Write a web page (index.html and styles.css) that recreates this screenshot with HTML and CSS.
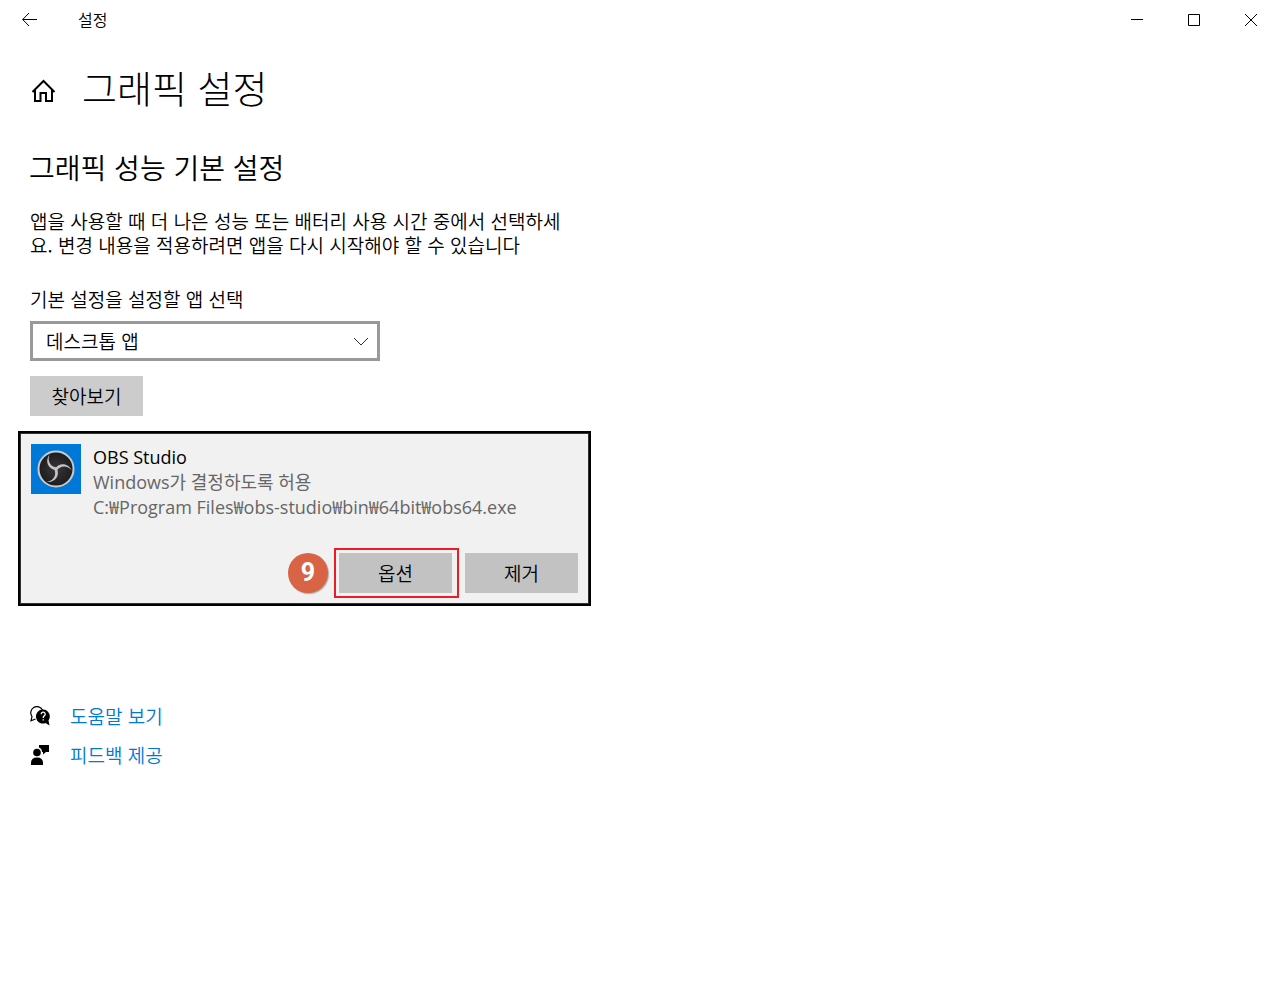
FILE: index.html
```html
<!DOCTYPE html>
<html lang="ko">

<head>
    <meta charset="utf-8">
    <title>설정</title>
    <link rel="stylesheet" href="styles.css">
</head>

<body>
    <header class="titlebar">
        <button class="back" aria-label="뒤로">
            <svg width="16" height="16" viewBox="0 0 16 16"><path d="M15 7.5H.7M7 1L.7 7.5L7 14"/></svg>
        </button>
        <span class="app-title">설정</span>
        <div class="window-buttons">
            <button aria-label="최소화"><svg width="12" height="12" viewBox="0 0 12 12" shape-rendering="crispEdges"><path d="M0 5.5H12"/></svg></button>
            <button aria-label="최대화"><svg width="12" height="12" viewBox="0 0 12 12"><path d="M.5 .5H11.5V11.5H.5Z"/></svg></button>
            <button aria-label="닫기"><svg width="12" height="12" viewBox="0 0 12 12"><path d="M0 0L12 12M12 0L0 12"/></svg></button>
        </div>
    </header>

    <main class="page">
        <div class="heading">
            <svg class="home" width="26" height="24" viewBox="0 0 26 24"><path d="M2.500 13L13.500 2L24.500 13M5 11V22H10.500V14H16V22H22V11"/></svg>
            <h1>그래픽 설정</h1>
        </div>

        <h2>그래픽 성능 기본 설정</h2>
        <p class="description">앱을 사용할 때 더 나은 성능 또는 배터리 사용 시간 중에서 선택하세요. 변경 내용을 적용하려면 앱을 다시 시작해야 할 수 있습니다</p>

        <label class="field-label" for="app-type">기본 설정을 설정할 앱 선택</label>
        <div class="select-box">
            <select id="app-type">
                <option>데스크톱 앱</option>
            </select>
            <svg class="chevron" width="16" height="10" viewBox="0 0 16 10"><path d="M1 1L8 8L15 1"/></svg>
        </div>
        <button class="btn browse">찾아보기</button>

        <section class="app-card">
            <div class="app-info">
                <svg class="app-icon" width="50" height="50" viewBox="0 0 50 50">
                    <defs>
                        <radialGradient id="disc"><stop offset="0" stop-color="#39363a"/><stop offset="1" stop-color="#1d1b1e"/></radialGradient>
                    </defs>
                    <rect width="50" height="50" fill="#0078d7"/>
                    <circle cx="25" cy="25" r="17.500" fill="url(#disc)" stroke="#c9c9cb" stroke-width="2"/>
                    <g fill="#c4c4c6">
                        <path id="blade" d="M18.500 10.500C13.500 17 17 25.500 25 26L26 23.500C19.500 23 16 17 18.500 10.500Z"/>
                        <use href="#blade" transform="rotate(120 25 25)"/>
                        <use href="#blade" transform="rotate(240 25 25)"/>
                    </g>
                </svg>
                <div class="app-text">
                    <div class="app-name">OBS Studio</div>
                    <div>Windows가 결정하도록 허용</div>
                    <div>C:₩Program Files₩obs-studio₩bin₩64bit₩obs64.exe</div>
                </div>
            </div>
            <div class="app-actions">
                <span class="step">9</span>
                <div class="highlight"><button class="btn">옵션</button></div>
                <button class="btn">제거</button>
            </div>
        </section>

        <nav class="links">
            <a href="#">
                <svg width="20" height="20" viewBox="0 0 20 20">
                    <path d="M5.500 13L1 14.800L2 10.500A6.200 6.200 0 1 1 12.500 4" fill="none" stroke="#000" stroke-width="1.200"/>
                    <path d="M13 3.500A7 7 0 1 0 15.500 17L19.500 19.500L18.500 14.500A7 7 0 0 0 13 3.500Z"/>
                    <path d="M11.200 8.300A2 2 0 1 1 14.200 9.900Q13.200 10.500 13.200 12M13.200 13.200V14.600" fill="none" stroke="#fff" stroke-width="1.300"/>
                </svg>
                <span>도움말 보기</span>
            </a>
            <a href="#">
                <svg width="20" height="20" viewBox="0 0 20 20">
                    <circle cx="7" cy="7.500" r="3.800"/>
                    <path d="M1 20V18Q1 12.500 7 12.500T13 18V20Z"/>
                    <path d="M9 0H19V7H16L13 9.500V7H12Q12 3.500 9 2.500Z"/>
                </svg>
                <span>피드백 제공</span>
            </a>
        </nav>
    </main>
</body>

</html>
```

FILE: styles.css
```css
* {
    box-sizing: border-box;
}

body {
    margin: 0;
    background: #fff;
    color: #000;
    font-family: "Noto Sans CJK KR", sans-serif;
    font-size: 19px;
    font-weight: 350;
    line-height: 25px;
}

button,
select {
    font: inherit;
    color: inherit;
    border: 0;
    border-radius: 0;
    padding: 0;
}

svg {
    display: block;
    flex: none;
}

h1,
h2,
p {
    margin: 0;
}

.titlebar {
    display: flex;
    align-items: center;
    height: 40px;
    padding-right: 1px;
    font-size: 16px;
}

.titlebar button {
    display: flex;
    align-items: center;
    justify-content: center;
    width: 57px;
    height: 40px;
    background: none;
}

.titlebar svg {
    fill: none;
    stroke: #000;
}

.titlebar .back {
    width: 60px;
}

.app-title {
    margin-left: 18px;
    padding-bottom: 2px;
}

.window-buttons {
    display: flex;
    margin-left: auto;
}

.page {
    max-width: 609px;
    padding: 22px 18px;
}

.heading {
    display: flex;
    align-items: center;
    padding-left: 12px;
    gap: 26px;
}

.home {
    margin-top: 8px;
    fill: none;
    stroke: #000;
    stroke-width: 2;
}

h1 {
    font-size: 38px;
    font-weight: 300;
    line-height: 50px;
}

h2 {
    margin: 35px 11px 0;
    font-size: 28px;
    font-weight: 350;
    line-height: 40px;
}

.description {
    max-width: 545px;
    margin: 22px 12px 0;
    line-height: 24px;
}

.field-label {
    display: block;
    margin: 29px 12px 10px;
}

.select-box {
    position: relative;
    max-width: 350px;
    margin-left: 12px;
}

.select-box select {
    display: block;
    width: 100%;
    height: 40px;
    padding: 0 13px 2px;
    border: 3px solid #999;
    background: #fff;
    appearance: none;
}

.chevron {
    position: absolute;
    top: 16px;
    right: 11px;
    fill: none;
    stroke: #333;
    pointer-events: none;
}

.btn {
    display: block;
    width: 113px;
    height: 40px;
    padding-bottom: 2px;
    background: #c2c2c2;
}

.browse {
    margin: 15px 12px;
    background: #ccc;
}

.app-card {
    padding: 11px 11px 6px;
    border: 2px solid #000;
    box-shadow: inset 0 0 0 1px #333;
    background: #f1f1f1;
}

.app-info {
    display: flex;
    gap: 12px;
}

.app-text {
    padding-top: 1px;
    color: #666;
    font-family: "Open Sans", "Noto Sans CJK KR", sans-serif;
    font-size: 18px;
    font-weight: 400;
}

.app-name {
    color: #000;
}

.app-actions {
    display: flex;
    align-items: center;
    justify-content: flex-end;
    gap: 6px;
    margin-top: 28px;
}

.step {
    width: 40px;
    height: 40px;
    border-radius: 50%;
    background: #d96445;
    box-shadow: 1px 1px 1px #aaa;
    color: #fff;
    font-family: Roboto, sans-serif;
    font-size: 25px;
    font-weight: 700;
    line-height: 40px;
    text-align: center;
}

.highlight {
    padding: 3px 5px 3px 3px;
    border: 2px solid #ed1c24;
}

.links {
    display: flex;
    flex-direction: column;
    gap: 14px;
    margin: 97px 12px 0;
}

.links a {
    display: flex;
    align-items: center;
    gap: 20px;
    color: #0078d7;
    text-decoration: none;
}
```
